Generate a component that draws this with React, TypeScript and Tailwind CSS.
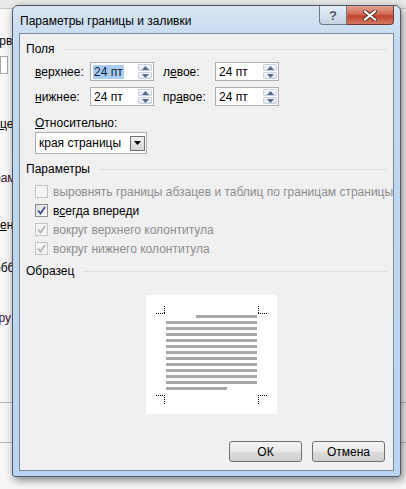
import React from 'react';

const font = "font-['Liberation_Sans',Arial,sans-serif]";

function Spin({ value, selected }: { value: string; selected?: boolean }) {
  return (
    <div className="flex h-[19px] w-[64px] border border-[#abadb3] bg-white">
      <div className="flex flex-1 items-center pl-[2px] text-[12px] leading-none text-black">
        <span className={selected ? 'bg-[#a8cdf1] text-[#0b1a3a] px-[1px] py-[1px]' : 'px-[1px]'}>{value}</span>
      </div>
      <div className="flex w-[15px] flex-col gap-[1px] py-[1px] pr-[1px]">
        <div className="flex flex-1 items-center justify-center rounded-[1px] border border-[#c9d3de] bg-gradient-to-b from-[#f4f7fa] to-[#dfe6ee]">
          <svg width="7" height="4" viewBox="0 0 7 4"><path d="M0 4 L3.5 0 L7 4 Z" fill="#56688c" /></svg>
        </div>
        <div className="flex flex-1 items-center justify-center rounded-[1px] border border-[#c9d3de] bg-gradient-to-b from-[#f4f7fa] to-[#dfe6ee]">
          <svg width="7" height="4" viewBox="0 0 7 4"><path d="M0 0 L3.5 4 L7 0 Z" fill="#56688c" /></svg>
        </div>
      </div>
    </div>
  );
}

function Heading({ text }: { text: string }) {
  return (
    <div className="flex h-[16px] items-center pl-[6px] pr-[6px]">
      <span className="text-[12px] text-black">{text}</span>
      <div className="ml-[8px] h-px flex-1 bg-[#d5dfe5]" />
    </div>
  );
}

function Check({ checked, disabled, children }: { checked?: boolean; disabled?: boolean; children: React.ReactNode }) {
  return (
    <div className="flex h-[19px] items-center pl-[15px]">
      <div
        className={`flex h-[13px] w-[13px] shrink-0 items-center justify-center border ${
          disabled ? 'border-[#c4c4c4] bg-[#f4f4f4]' : 'border-[#8e8f8f] bg-gradient-to-br from-[#dcdcdc] to-[#fbfbfb]'
        }`}
      >
        {checked && (
          <svg width="9" height="9" viewBox="0 0 9 9">
            <path d="M1 4.5 L3.5 7.5 L8 1" fill="none" stroke={disabled ? '#b4b4b4' : '#3c4f8a'} strokeWidth="1.8" />
          </svg>
        )}
      </div>
      <span className={`ml-[5px] whitespace-nowrap text-[12px] ${disabled ? 'text-[#8d8d8d]' : 'text-black'}`}>{children}</span>
    </div>
  );
}

function Btn({ children }: { children: React.ReactNode }) {
  return (
    <div className="flex h-[21px] w-[73px] items-center justify-center rounded-[3px] border border-[#707070] bg-[linear-gradient(#f2f2f2_0%,#ebebeb_48%,#dddddd_52%,#cfcfcf_100%)] text-[12px] text-black">
      {children}
    </div>
  );
}

function Preview() {
  const full = Array.from({ length: 11 }, (_, i) => 26 + i * 6);
  return (
    <div className="ml-[126px] mt-[16px] h-[119px] w-[131px] bg-white">
      <svg width="131" height="119" viewBox="0 0 131 119">
        <g stroke="#000" strokeWidth="1" strokeDasharray="1 1" fill="none">
          <path d="M10 18.5 H19 M18.5 11 V19" />
          <path d="M112 18.5 H121 M112.5 11 V19" />
          <path d="M10 100.5 H19 M18.5 100 V109" />
          <path d="M112 100.5 H121 M112.5 100 V109" />
        </g>
        <rect x="50" y="20" width="61" height="3" fill="#a9a9a9" />
        {full.map((y) => (
          <rect key={y} x="20" y={y} width="91" height="3" fill="#a9a9a9" />
        ))}
        <rect x="20" y="92" width="61" height="3" fill="#a9a9a9" />
      </svg>
    </div>
  );
}

export default function App() {
  return (
    <div className={`relative h-[489px] w-[406px] overflow-hidden bg-[#f2f2f2] ${font}`}>
      {/* Word window behind the dialog */}
      <div className="flex h-full flex-col bg-[#f7f7f7] text-[12px] text-black">
        <div className="h-[9px] border-b border-[#c8c8c8] bg-[#e9e9e9]" />
        <div className="-ml-[28px] mt-[24px] h-[16px] whitespace-nowrap leading-[16px]">Интервал</div>
        <div className="mt-[7px] h-[18px] w-[8px] border border-[#a8a8a8] bg-white" />
        <div className="mt-[42px] whitespace-nowrap leading-[16px]">
          <span className="underline">ц</span>ет
        </div>
        <div className="-ml-[6px] mt-[38px] whitespace-nowrap leading-[16px] text-[#3a1030]">рам</div>
        <div className="mt-[31px] whitespace-nowrap leading-[16px]">
          <span className="underline">е</span>н
        </div>
        <div className="-ml-[6px] mt-[27px] whitespace-nowrap leading-[16px]">обб</div>
        <div className="-ml-[6px] mt-[34px] whitespace-nowrap leading-[16px] text-[#3a1030]">гру</div>
        <div className="mt-[76px] h-px bg-[#b8b8b8]" />
        <div className="mt-[39px] h-px bg-[#b8b8b8]" />
      </div>

      {/* Dialog */}
      <div className="absolute left-[12px] top-[5px] flex h-[472px] w-[389px] flex-col rounded-t-[6px] rounded-b-[3px] border border-[#4f5a66] bg-[linear-gradient(#d9e5f2,#c2d9f1_40px,#b9d5f1)] px-[6px] pb-[5px] shadow-[2px_3px_8px_rgba(0,0,0,0.5)]">
        {/* title bar */}
        <div className="flex h-[27px] items-start">
          <span className="ml-[1px] mt-[7px] text-[12px] leading-[16px] text-black">Параметры границы и заливки</span>
          <div className="ml-auto flex">
            <div className="flex h-[19px] w-[28px] items-center justify-center rounded-bl-[4px] border border-t-0 border-[#6d7887] bg-gradient-to-b from-[#e6eef7] to-[#c6d3e3]">
              <span className="text-[13px] font-bold leading-none text-[#4b5563] [text-shadow:0_0_1px_#fff]">?</span>
            </div>
            <div className="flex h-[19px] w-[47px] items-center justify-center rounded-br-[4px] border border-l-0 border-t-0 border-[#6d3a33] bg-[linear-gradient(#e4a393,#cf6a55_45%,#c0432c_55%,#d5775f)]">
              <svg width="14" height="11" viewBox="0 0 14 11">
                <path d="M2 1.5 L12 9.5 M12 1.5 L2 9.5" stroke="#4a2620" strokeWidth="4" strokeLinecap="square" />
                <path d="M2 1.5 L12 9.5 M12 1.5 L2 9.5" stroke="#ffffff" strokeWidth="2.2" strokeLinecap="square" />
              </svg>
            </div>
          </div>
        </div>

        {/* client area */}
        <div className="flex flex-1 flex-col border border-[#7a8796] bg-[#f0f0f0] pt-[7px]">
          <Heading text="Поля" />
          <div className="mt-[5px] flex items-center pl-[15px]">
            <span className="w-[55px] text-[12px] text-black">
              <span className="underline">в</span>ерхнее:
            </span>
            <Spin value="24 пт" selected />
            <span className="ml-[9px] w-[52px] text-[12px] text-black">
              л<span className="underline">е</span>вое:
            </span>
            <Spin value="24 пт" />
          </div>
          <div className="mt-[6px] flex items-center pl-[15px]">
            <span className="w-[55px] text-[12px] text-black">
              <span className="underline">н</span>ижнее:
            </span>
            <Spin value="24 пт" />
            <span className="ml-[9px] w-[52px] text-[12px] text-black">
              пр<span className="underline">а</span>вое:
            </span>
            <Spin value="24 пт" />
          </div>
          <div className="mt-[9px] flex h-[16px] items-center pl-[15px] text-[12px] text-black">
            <span className="underline">О</span>тносительно:
          </div>
          <div className="ml-[15px] mt-[1px] flex h-[22px] w-[112px] items-center border border-[#abadb3] bg-white pl-[3px] pr-[1px]">
            <span className="flex-1 text-[12px] text-black">края страницы</span>
            <div className="flex h-[15px] w-[15px] items-center justify-center border border-[#707070] bg-gradient-to-b from-[#f2f2f2] to-[#d4d4d4]">
              <svg width="7" height="4" viewBox="0 0 7 4"><path d="M0 0 L3.5 4 L7 0 Z" fill="#000" /></svg>
            </div>
          </div>

          <div className="mt-[7px]">
            <Heading text="Параметры" />
          </div>
          <div className="mt-[5px] flex flex-col">
            <Check disabled>выровнять границы абзацев и таблиц по границам страницы</Check>
            <Check checked>
              в<span className="underline">с</span>егда впереди
            </Check>
            <Check checked disabled>вокруг верхнего колонтитула</Check>
            <Check checked disabled>вокруг нижнего колонтитула</Check>
          </div>

          <div className="mt-[5px]">
            <Heading text="Образец" />
          </div>
          <Preview />

          <div className="mt-auto flex justify-end gap-[10px] pb-[8px] pr-[8px]">
            <Btn>ОК</Btn>
            <Btn>Отмена</Btn>
          </div>
        </div>
      </div>
    </div>
  );
}
